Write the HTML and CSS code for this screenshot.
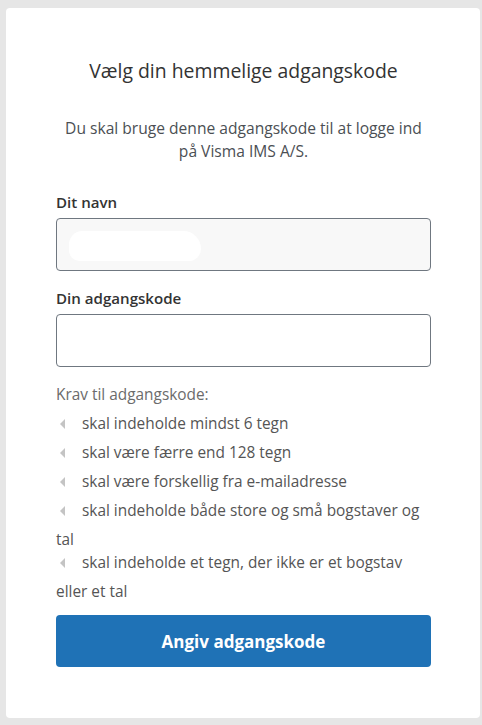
FILE: index.html
```html
<!DOCTYPE html>
<html lang="da">
<head>
<meta charset="utf-8">
<title>Vælg din hemmelige adgangskode</title>
<link rel="stylesheet" href="styles.css">
</head>
<body>
<main class="card">
  <h1 class="title">Vælg din hemmelige adgangskode</h1>
  <p class="intro">Du skal bruge denne adgangskode til at logge ind<br>på Visma IMS A/S.</p>

  <div class="group">
    <label class="label">Dit navn</label>
    <div class="field field-disabled"><span class="blob"></span></div>
  </div>

  <div class="group">
    <label class="label">Din adgangskode</label>
    <div class="field"></div>
  </div>

  <p class="req-title">Krav til adgangskode:</p>
  <ul class="reqs">
    <li><span class="mark"><svg width="6" height="10" viewBox="0 0 6 10"><polygon points="5,0 5,10 0,5" fill="#c4c4c4"/></svg></span>skal indeholde mindst 6 tegn</li>
    <li><span class="mark"><svg width="6" height="10" viewBox="0 0 6 10"><polygon points="5,0 5,10 0,5" fill="#c4c4c4"/></svg></span>skal være færre end 128 tegn</li>
    <li><span class="mark"><svg width="6" height="10" viewBox="0 0 6 10"><polygon points="5,0 5,10 0,5" fill="#c4c4c4"/></svg></span>skal være forskellig fra e-mailadresse</li>
    <li><span class="mark"><svg width="6" height="10" viewBox="0 0 6 10"><polygon points="5,0 5,10 0,5" fill="#c4c4c4"/></svg></span>skal indeholde både store og små bogstaver og tal</li>
    <li><span class="mark"><svg width="6" height="10" viewBox="0 0 6 10"><polygon points="5,0 5,10 0,5" fill="#c4c4c4"/></svg></span>skal indeholde et tegn, der ikke er et bogstav eller et tal</li>
  </ul>

  <button class="btn" type="button">Angiv adgangskode</button>
</main>
</body>
</html>
```

FILE: styles.css
```css
html, body {
  margin: 0;
  padding: 0;
}

body {
  background: #e6e6e6;
  font-family: "Open Sans", "Noto Sans", "Liberation Sans", sans-serif;
  font-size: 15.4px;
  color: #333;
  padding: 8px 2px 7px 6px;
}

.card {
  box-sizing: border-box;
  min-height: 710px;
  background: #fff;
  border-radius: 4px;
  padding: 50px 49px 50px 50px;
  display: flex;
  flex-direction: column;
}

.title {
  margin: 0;
  font-size: 19.4px;
  font-weight: 400;
  line-height: 26px;
  text-align: center;
  color: #333;
}

.intro {
  margin: 33px 0 0;
  line-height: 23px;
  text-align: center;
  color: #4b4f54;
  font-size: 15.6px;
}

.group {
  display: flex;
  flex-direction: column;
}

.group + .group {
  margin-top: 16px;
}

.intro + .group {
  margin-top: 28px;
}

.label {
  font-size: 15.1px;
  font-weight: 600;
  line-height: 22px;
  margin-bottom: 5px;
  color: #333;
}

.field {
  height: 51px;
  border: 1px solid #6f7780;
  border-radius: 4px;
  background: #fff;
  display: flex;
  align-items: center;
  padding-left: 12px;
}

.field-disabled {
  background: #f8f8f8;
}

.blob {
  width: 132px;
  height: 30px;
  border-radius: 15px 20px 14px 12px;
  background: #fff;
  margin-top: 2px;
}

.req-title {
  margin: 16px 0 6px;
  line-height: 23px;
  color: #6b6b6b;
}

.reqs {
  list-style: none;
  margin: 0;
  padding: 0;
  color: #555;
}

.reqs li {
  line-height: 23px;
}

.mark {
  display: inline-block;
  width: 26px;
  height: 29px;
  vertical-align: top;
  position: relative;
}

.mark svg {
  position: absolute;
  left: 4px;
  top: 7px;
}

.btn {
  margin-top: 12px;
  height: 52px;
  border: none;
  border-radius: 4px;
  background: #1f72b6;
  color: #fff;
  font-family: inherit;
  font-size: 17px;
  font-weight: 700;
  cursor: pointer;
}
```
